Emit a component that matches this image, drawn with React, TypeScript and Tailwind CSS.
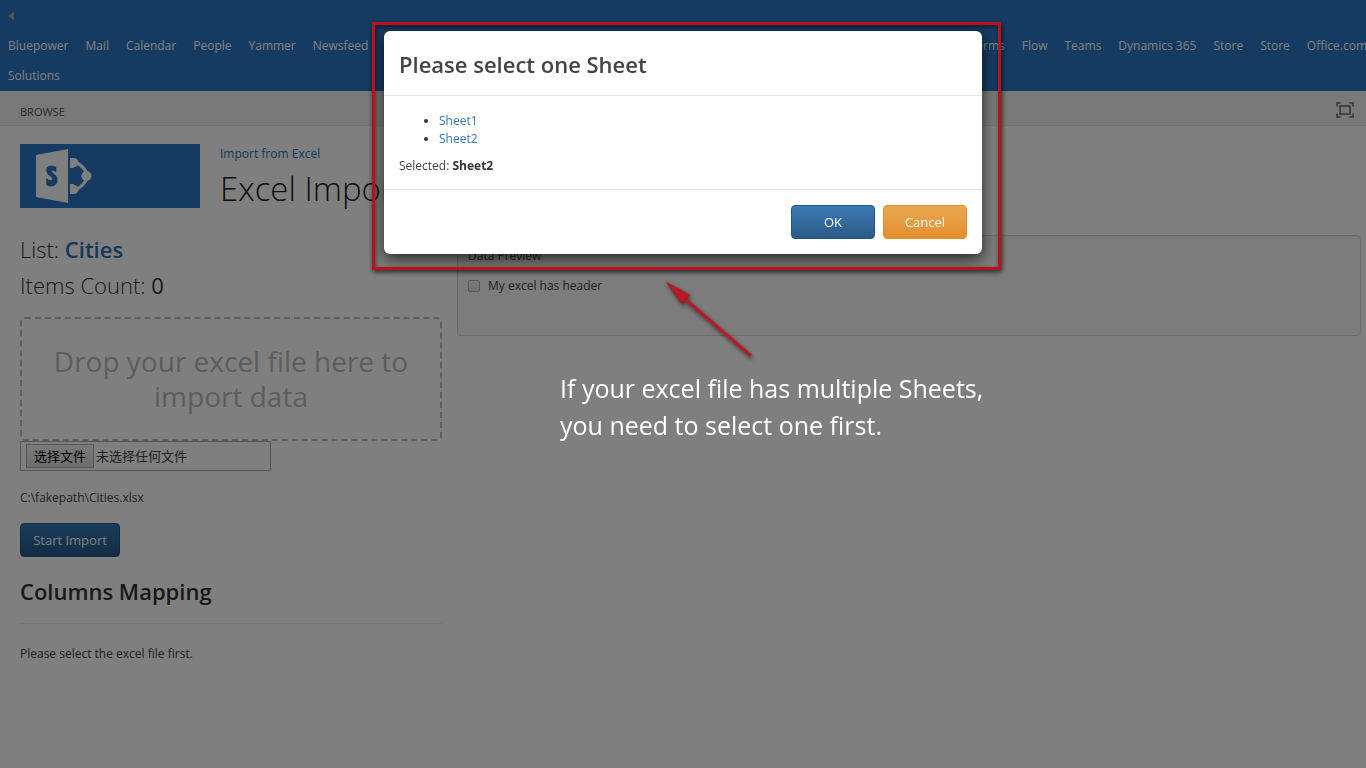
import React from "react";

const leftLinks = ["Bluepower", "Mail", "Calendar", "People", "Yammer", "Newsfeed"];
const rightLinks = ["Forms", "Flow", "Teams", "Dynamics 365", "Store", "Store", "Office.com"];

function NavLinks({ items }: { items: string[] }) {
  return (
    <>
      {items.map((item, i) => (
        <a key={i} href="#" className="shrink-0 whitespace-nowrap">
          {item}
        </a>
      ))}
    </>
  );
}

function TopBar() {
  return (
    <header className="overflow-hidden bg-[#2a76c4] text-xs text-white">
      <div className="flex h-[31px] items-center pl-2">
        <svg width="7" height="10" viewBox="0 0 7 10" aria-hidden="true">
          <path d="M6 1v8L1 6V4z" fill="#a8a8a8" />
        </svg>
      </div>
      <nav className="pl-2 leading-[30px]">
        <div className="-mr-px flex justify-between">
          <div className="flex gap-[17px]">
            <NavLinks items={leftLinks} />
          </div>
          <div className="flex gap-[17px]">
            <NavLinks items={rightLinks} />
          </div>
        </div>
        <a href="#">Solutions</a>
      </nav>
    </header>
  );
}

function Ribbon() {
  return (
    <div className="flex h-[35px] items-center justify-between border-b border-[#e6e6e6] bg-[#f3f3f3] pt-2 pr-3 pl-5">
      <a href="#" className="text-[11px] text-[#555555]">
        BROWSE
      </a>
      <button type="button" aria-label="Focus on content" className="pb-1">
        <svg width="18" height="16" viewBox="0 0 18 16" fill="none" stroke="#666" strokeWidth="1.500">
          <path d="M1 4.500V1h3.500M13.500 1H17v3.500M17 11.500V15h-3.500M4.500 15H1v-3.500" />
          <rect x="4" y="4" width="10" height="8" />
        </svg>
      </button>
    </div>
  );
}

function Logo() {
  return (
    <a href="#" aria-label="SharePoint" className="block h-16 w-[180px] bg-[#2a76c4]">
      <svg width="90" height="64" viewBox="0 0 90 64" aria-hidden="true">
        <path d="M16 11L48 5v54l-32-6z" fill="#fff" />
        <path
          d="M35.500 23.500c-2-1-3.500-1.300-5.200-1.100-2.400.3-3.500 2.300-3.300 4.400.2 2.200 1.600 3.500 3.700 4.900 1.900 1.300 2.700 2.300 2.300 4-.5 1.900-3.400 1.900-6-.2v5c3 1.500 6.200 1.400 8.300-.6 1.900-1.900 2.100-5.400.3-7.600-1.700-2.100-4.800-3.200-4.500-5.200.4-1.900 2.700-1.400 4.400-.1z"
          fill="#2a76c4"
          stroke="#2a76c4"
          strokeWidth="1.500"
        />
        <g fill="#fff">
          <path
            d="M54 18c6 2.500 10 6 13 11M54 46c6-2.500 10-6 13-11M54 21c3 3 3.500 7 3.500 11s-.5 8-3.500 11"
            fill="none"
            stroke="#2a76c4"
            strokeWidth="1"
          />
          <path d="M55 18c6 2.500 9.500 6 12 12M55 46c6-2.500 9.500-6 12-12" fill="none" stroke="#fff" strokeWidth="3.200" />
          <path d="M61 32c2-1 3-3 4-6l6 6-6 6c-1-3-2-5-4-6z" />
          <circle cx="66.500" cy="32" r="5" />
          <path d="M50 14h4a4.500 4.500 0 0 1 2 8.500l-3 1.500h-3zM50 50h4a4.500 4.500 0 0 0 2-8.500l-3-1.500h-3z" />
        </g>
      </svg>
    </a>
  );
}

function LeftColumn() {
  return (
    <div className="w-[422px] shrink-0">
      <p className="text-[22px] leading-9 font-light text-[#333]">
        List:{" "}
        <a href="#" className="font-semibold text-[#2a70b8]">
          Cities
        </a>
      </p>
      <p className="text-[22px] leading-9 font-light text-[#333]">
        Items Count: <span className="font-normal">0</span>
      </p>
      <div className="mt-[14px] flex h-[124px] items-center justify-center rounded-[5px] border-2 border-dashed border-[#bbb] px-5 text-center text-[28px] leading-[35px] text-[#bbb]">
        Drop your excel file here to import data
      </div>
      <label className="flex h-[30px] w-[251px] items-center border border-[#ababab] px-[5px] font-['Noto_Sans_CJK_SC',sans-serif] text-[13px] leading-4 text-[#444]">
        <input type="file" className="hidden" />
        <span className="border border-[#aaa] bg-linear-to-b from-[#f4f4f4] to-[#dcdcdc] px-[7px] py-[3px] text-black">
          选择文件
        </span>
        <span className="pl-[2px]">未选择任何文件</span>
      </label>
      <p className="mt-[18px] text-xs leading-[18px]">C:\fakepath\Cities.xlsx</p>
      <button
        type="button"
        className="mt-4 h-[34px] w-[100px] rounded border border-[#245580] bg-linear-to-b from-[#337ab7] to-[#265a88] pt-px text-[13px] text-white"
      >
        Start Import
      </button>
      <h2 className="mt-4 text-[22px] leading-9 font-semibold text-[#333]">Columns Mapping</h2>
      <hr className="mt-[14px] border-[#eee]" />
      <p className="mt-[21px] text-xs leading-[18px]">Please select the excel file first.</p>
    </div>
  );
}

function PreviewPanel() {
  return (
    <section className="mt-1 h-[101px] flex-1 rounded border border-[#d5d5d5] bg-[#f8f8f8] px-[10px] py-[11px] text-xs leading-[18px] shadow-[inset_0_1px_1px_rgba(0,0,0,0.05)]">
      <p>Data Preview</p>
      <label className="mt-3 flex items-center gap-2">
        <input
          type="checkbox"
          className="size-3 appearance-none rounded-[2px] border border-[#b0b0b0] bg-linear-to-b from-[#f4f4f4] to-[#e0e0e0]"
        />
        My excel has header
      </label>
    </section>
  );
}

function SheetDialog() {
  const buttonBase = "h-[34px] w-[84px] rounded border pt-px text-[13px] text-white";
  return (
    <div
      role="dialog"
      aria-modal="true"
      aria-labelledby="sheet-title"
      className="relative w-[598px] rounded-md bg-white text-[#444] shadow-[0_5px_15px_rgba(0,0,0,0.7)]"
    >
      <h1 id="sheet-title" className="border-b border-[#e5e5e5] px-[15px] pt-[15px] pb-[13px] text-[22px] leading-9 font-semibold">
        Please select one Sheet
      </h1>
      <div className="px-[15px] pt-4 pb-[14px] text-xs leading-[18px]">
        <ul className="list-disc pl-10 text-[#333]">
          <li>
            <a href="#" className="text-[#337ab7]">
              Sheet1
            </a>
          </li>
          <li>
            <a href="#" className="text-[#337ab7]">
              Sheet2
            </a>
          </li>
        </ul>
        <p className="mt-[9px]">
          Selected: <b className="text-[#333]">Sheet2</b>
        </p>
      </div>
      <div className="flex justify-end gap-2 border-t border-[#e5e5e5] p-[15px]">
        <button type="button" className={`${buttonBase} border-[#245580] bg-linear-to-b from-[#3d7ab5] to-[#2c5a88]`}>
          OK
        </button>
        <button type="button" className={`${buttonBase} border-[#e38d2c] bg-linear-to-b from-[#e9a750] to-[#e28f2e]`}>
          Cancel
        </button>
      </div>
      <div className="pointer-events-none absolute -top-[9px] -right-[19px] -bottom-[16px] -left-[12px] border-3 border-[#bd101c] shadow-[1px_2px_5px_rgba(0,0,0,0.7),inset_1px_2px_5px_rgba(0,0,0,0.5)]" />
      <Callout />
    </div>
  );
}

function Callout() {
  return (
    <div className="absolute top-[246px] left-[176px]">
      <svg
        width="100"
        height="88"
        viewBox="0 0 100 88"
        aria-hidden="true"
        className="ml-[101px] drop-shadow-[1px_2px_2px_rgba(0,0,0,0.6)]"
      >
        <path d="M24 22L90 79" stroke="#b91825" strokeWidth="3" />
        <path d="M5 5l24 13-5 4-3 5z" fill="#b91825" stroke="#9c1420" strokeWidth="0.500" />
      </svg>
      <p className="mt-[5px] text-[25px] leading-[37px] whitespace-nowrap text-white">
        If your excel file has multiple Sheets,
        <br />
        you need to select one first.
      </p>
    </div>
  );
}

export default function App() {
  return (
    <div className="min-h-screen overflow-hidden bg-white font-['Open_Sans','Noto_Sans_CJK_SC',sans-serif] text-[#444]">
      <TopBar />
      <Ribbon />
      <main className="pt-[18px] pr-[5px] pl-5">
        <div className="flex gap-5">
          <Logo />
          <div>
            <a href="#" className="block text-xs leading-5 text-[#2a70b8]">
              Import from Excel
            </a>
            <h1 className="text-[33px] leading-[50px] font-light text-[#222]">Excel Import</h1>
          </div>
        </div>
        <div className="mt-[17px] flex gap-[15px]">
          <LeftColumn />
          <PreviewPanel />
        </div>
      </main>
      <div className="fixed inset-0 flex items-start justify-center bg-black/50 pt-[31px]">
        <SheetDialog />
      </div>
    </div>
  );
}
